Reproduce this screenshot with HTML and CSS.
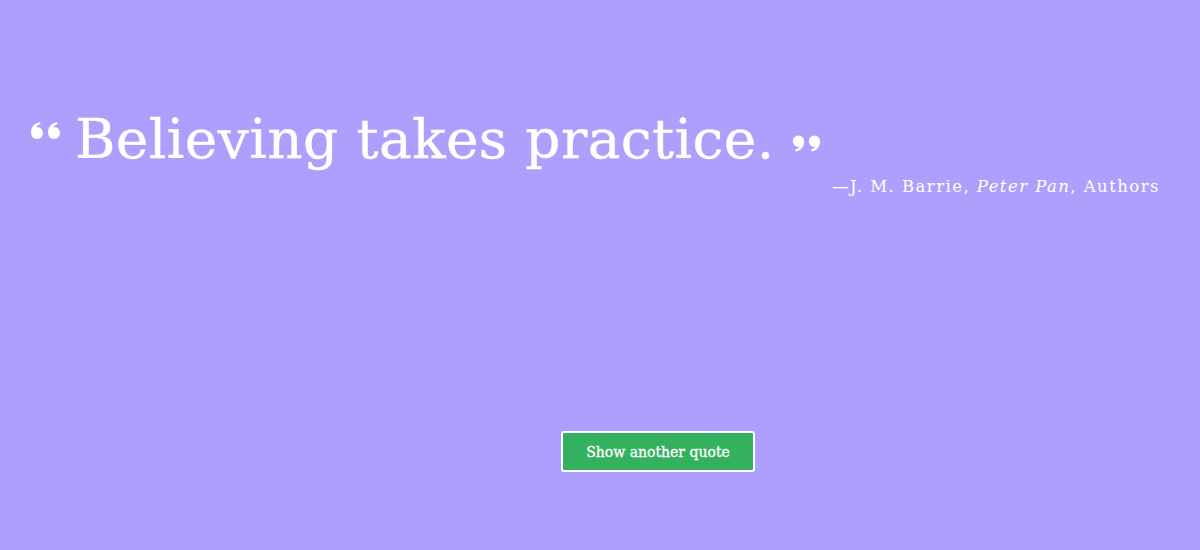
FILE: index.html
```html
<!DOCTYPE html>
<html>
<head>
<meta charset="utf-8">
<link rel="stylesheet" href="styles.css">
</head>
<body>
<main class="page">
  <section class="quote-box">
    <blockquote class="quote">
      <svg class="mark mark-left" viewBox="0 0 32 17" width="32" height="17"><circle cx="7" cy="11" r="6"/><path d="M1 11 C1 5 4 1.5 10 0 L10.5 2 C6.5 3.5 5 6 5.5 8 Z"/><circle cx="24" cy="11" r="6"/><path d="M18 11 C18 5 21 1.5 27 0 L27.5 2 C23.5 3.5 22 6 22.5 8 Z"/></svg>
      <span class="quote-text">Believing takes practice.</span>
      <svg class="mark mark-right" viewBox="0 0 32 17" width="30" height="17"><g transform="rotate(180 16 8.5)"><circle cx="7" cy="11" r="6"/><path d="M1 11 C1 5 4 1.5 10 0 L10.5 2 C6.5 3.5 5 6 5.5 8 Z"/><circle cx="24" cy="11" r="6"/><path d="M18 11 C18 5 21 1.5 27 0 L27.5 2 C23.5 3.5 22 6 22.5 8 Z"/></g></svg>
    </blockquote>
    <p class="author">—J. M. Barrie, <em>Peter Pan</em>, Authors</p>
  </section>
  <div class="actions">
    <button class="btn">Show another quote</button>
  </div>
</main>
</body>
</html>
```
FILE: styles.css
```css
html, body {
  margin: 0;
  padding: 0;
  height: 100%;
}
body {
  background: #ae9ffc;
  color: #ffffff;
  font-family: "DejaVu Serif", Georgia, serif;
}
.page {
  height: 550px;
  display: flex;
  flex-direction: column;
}
.quote-box {
  padding: 104px 40px 0 30px;
}
.quote {
  margin: 0;
  display: flex;
  align-items: center;
  gap: 13px;
}
.mark {
  fill: #ffffff;
  flex: none;
}
.mark-left {
  align-self: flex-start;
  margin-top: 18px;
}
.mark-right {
  align-self: flex-end;
  margin-bottom: 22px;
  margin-left: 3px;
}
.quote-text {
  font-size: 55px;
  line-height: 70px;
  letter-spacing: 0.4px;
  -webkit-text-stroke: 0.4px #ffffff;
}
.author {
  margin: 3px 0 0;
  text-align: right;
  font-size: 16.5px;
  letter-spacing: 1.45px;
}
.author em {
  font-style: italic;
}
.actions {
  margin-top: auto;
  margin-bottom: 78px;
  display: flex;
  justify-content: center;
  padding-left: 116px;
}
.btn {
  background: #33b15f;
  color: #ffffff;
  border: 2px solid #ffffff;
  border-radius: 3px;
  font-family: "DejaVu Serif", Georgia, serif;
  font-size: 14px;
  width: 194px;
  height: 41px;
  padding: 0;
  -webkit-text-stroke: 0.3px #ffffff;
}
```
